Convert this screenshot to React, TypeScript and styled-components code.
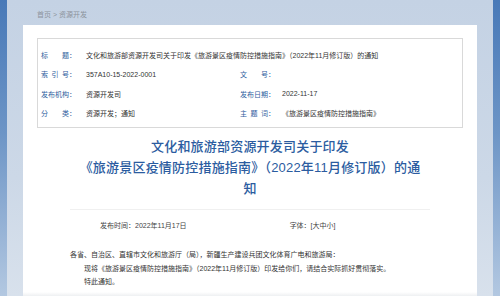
import React from "react";
import styled, { createGlobalStyle } from "styled-components";

const Global = createGlobalStyle`
  html, body { margin: 0; padding: 0; }
  body {
    width: 500px;
    height: 296px;
    overflow: hidden;
    font-family: "Liberation Sans", "Noto Sans CJK SC", sans-serif;
  }
`;

const Frame = styled.div`
  display: flex;
  width: 500px;
  height: 296px;
  background: linear-gradient(to bottom, #c4d2e4 0%, #ccd8e7 60%, #d8e1ec 100%);
`;

const Edge = styled.div`
  width: 7px;
  flex: none;
  background: linear-gradient(to bottom, #4879b8 0%, #6d95c6 45%, #b3c8e1 100%);
`;

const Main = styled.div`
  flex: 1;
  display: flex;
  flex-direction: column;
  padding: 0 16px;
  min-width: 0;
`;

const Breadcrumb = styled.div`
  height: 25px;
  line-height: 30px;
  padding-left: 14px;
  font-size: 7px;
  color: #8c939c;
`;

const Page = styled.div`
  flex: 1;
  background: linear-gradient(to bottom, #ffffff calc(100% - 4px), #eef0f2 100%);
  padding: 13px 14px 0;
`;

const InfoTable = styled.div`
  border: 1px solid #d9d9d9;
  padding: 6px 0 4px 3px;
  display: grid;
  grid-template-columns: 45px 154px 42px 1fr;
  grid-auto-rows: 19.5px;
  align-items: center;
  font-size: 7px;
  color: #333333;
`;

const LabelCell = styled.div`
  display: flex;
  align-items: center;
  color: #2f5e9e;
`;

const LabelChars = styled.span`
  display: flex;
  justify-content: space-between;
  width: 28px;
`;

const Value = styled.div<{ $wide?: boolean }>`
  white-space: nowrap;
  grid-column: ${(p) => (p.$wide ? "2 / 5" : "auto")};
`;

const Label: React.FC<{ text: string }> = ({ text }) => (
  <LabelCell>
    <LabelChars>
      {Array.from(text).map((c, i) => (
        <span key={i}>{c}</span>
      ))}
    </LabelChars>
    <span>：</span>
  </LabelCell>
);

const Title = styled.h1`
  margin: 8px 0 0;
  padding: 0 20px;
  text-align: center;
  font-size: 13px;
  line-height: 21px;
  font-weight: 500;
  letter-spacing: 0.2px;
  color: #2b5ca0;
`;

const Divider = styled.div`
  height: 1px;
  margin: 10px 33px 0;
  background: #f0f0f0;
`;

const Meta = styled.div`
  display: flex;
  gap: 103px;
  padding-left: 63px;
  margin-top: 9px;
  font-size: 7px;
  line-height: 14px;
  color: #444444;
`;

const Body = styled.div`
  margin: 15px 33px 0;
  font-size: 7px;
  line-height: 13.5px;
  color: #333333;
`;

const Para = styled.p<{ $indent?: boolean }>`
  margin: 0;
  text-indent: ${(p) => (p.$indent ? "14px" : "0")};
  white-space: nowrap;
`;

const rows: [string, string, string, string][] = [
  ["索引号", "357A10-15-2022-0001", "文号", ""],
  ["发布机构", "资源开发司", "发布日期", "2022-11-17"],
  ["分类", "资源开发；通知", "主题词", "《旅游景区疫情防控措施指南》"],
];

export default function App() {
  return (
    <>
      <Global />
      <Frame>
        <Edge />
        <Main>
          <Breadcrumb>首页 &gt; 资源开发</Breadcrumb>
          <Page>
            <InfoTable>
              <Label text="标题" />
              <Value $wide>
                文化和旅游部资源开发司关于印发《旅游景区疫情防控措施指南》（2022年11月修订版）的通知
              </Value>
              {rows.map(([l1, v1, l2, v2], i) => (
                <React.Fragment key={i}>
                  <Label text={l1} />
                  <Value>{v1}</Value>
                  <Label text={l2} />
                  <Value>{v2}</Value>
                </React.Fragment>
              ))}
            </InfoTable>
            <Title>
              文化和旅游部资源开发司关于印发
              <br />
              《旅游景区疫情防控措施指南》（2022年11月修订版）的通
              <br />
              知
            </Title>
            <Divider />
            <Meta>
              <span>发布时间：2022年11月17日</span>
              <span>字体：[大中小]</span>
            </Meta>
            <Body>
              <Para>各省、自治区、直辖市文化和旅游厅（局），新疆生产建设兵团文化体育广电和旅游局：</Para>
              <Para $indent>现将《旅游景区疫情防控措施指南》（2022年11月修订版）印发给你们，请结合实际抓好贯彻落实。</Para>
              <Para $indent>特此通知。</Para>
            </Body>
          </Page>
        </Main>
        <Edge />
      </Frame>
    </>
  );
}
